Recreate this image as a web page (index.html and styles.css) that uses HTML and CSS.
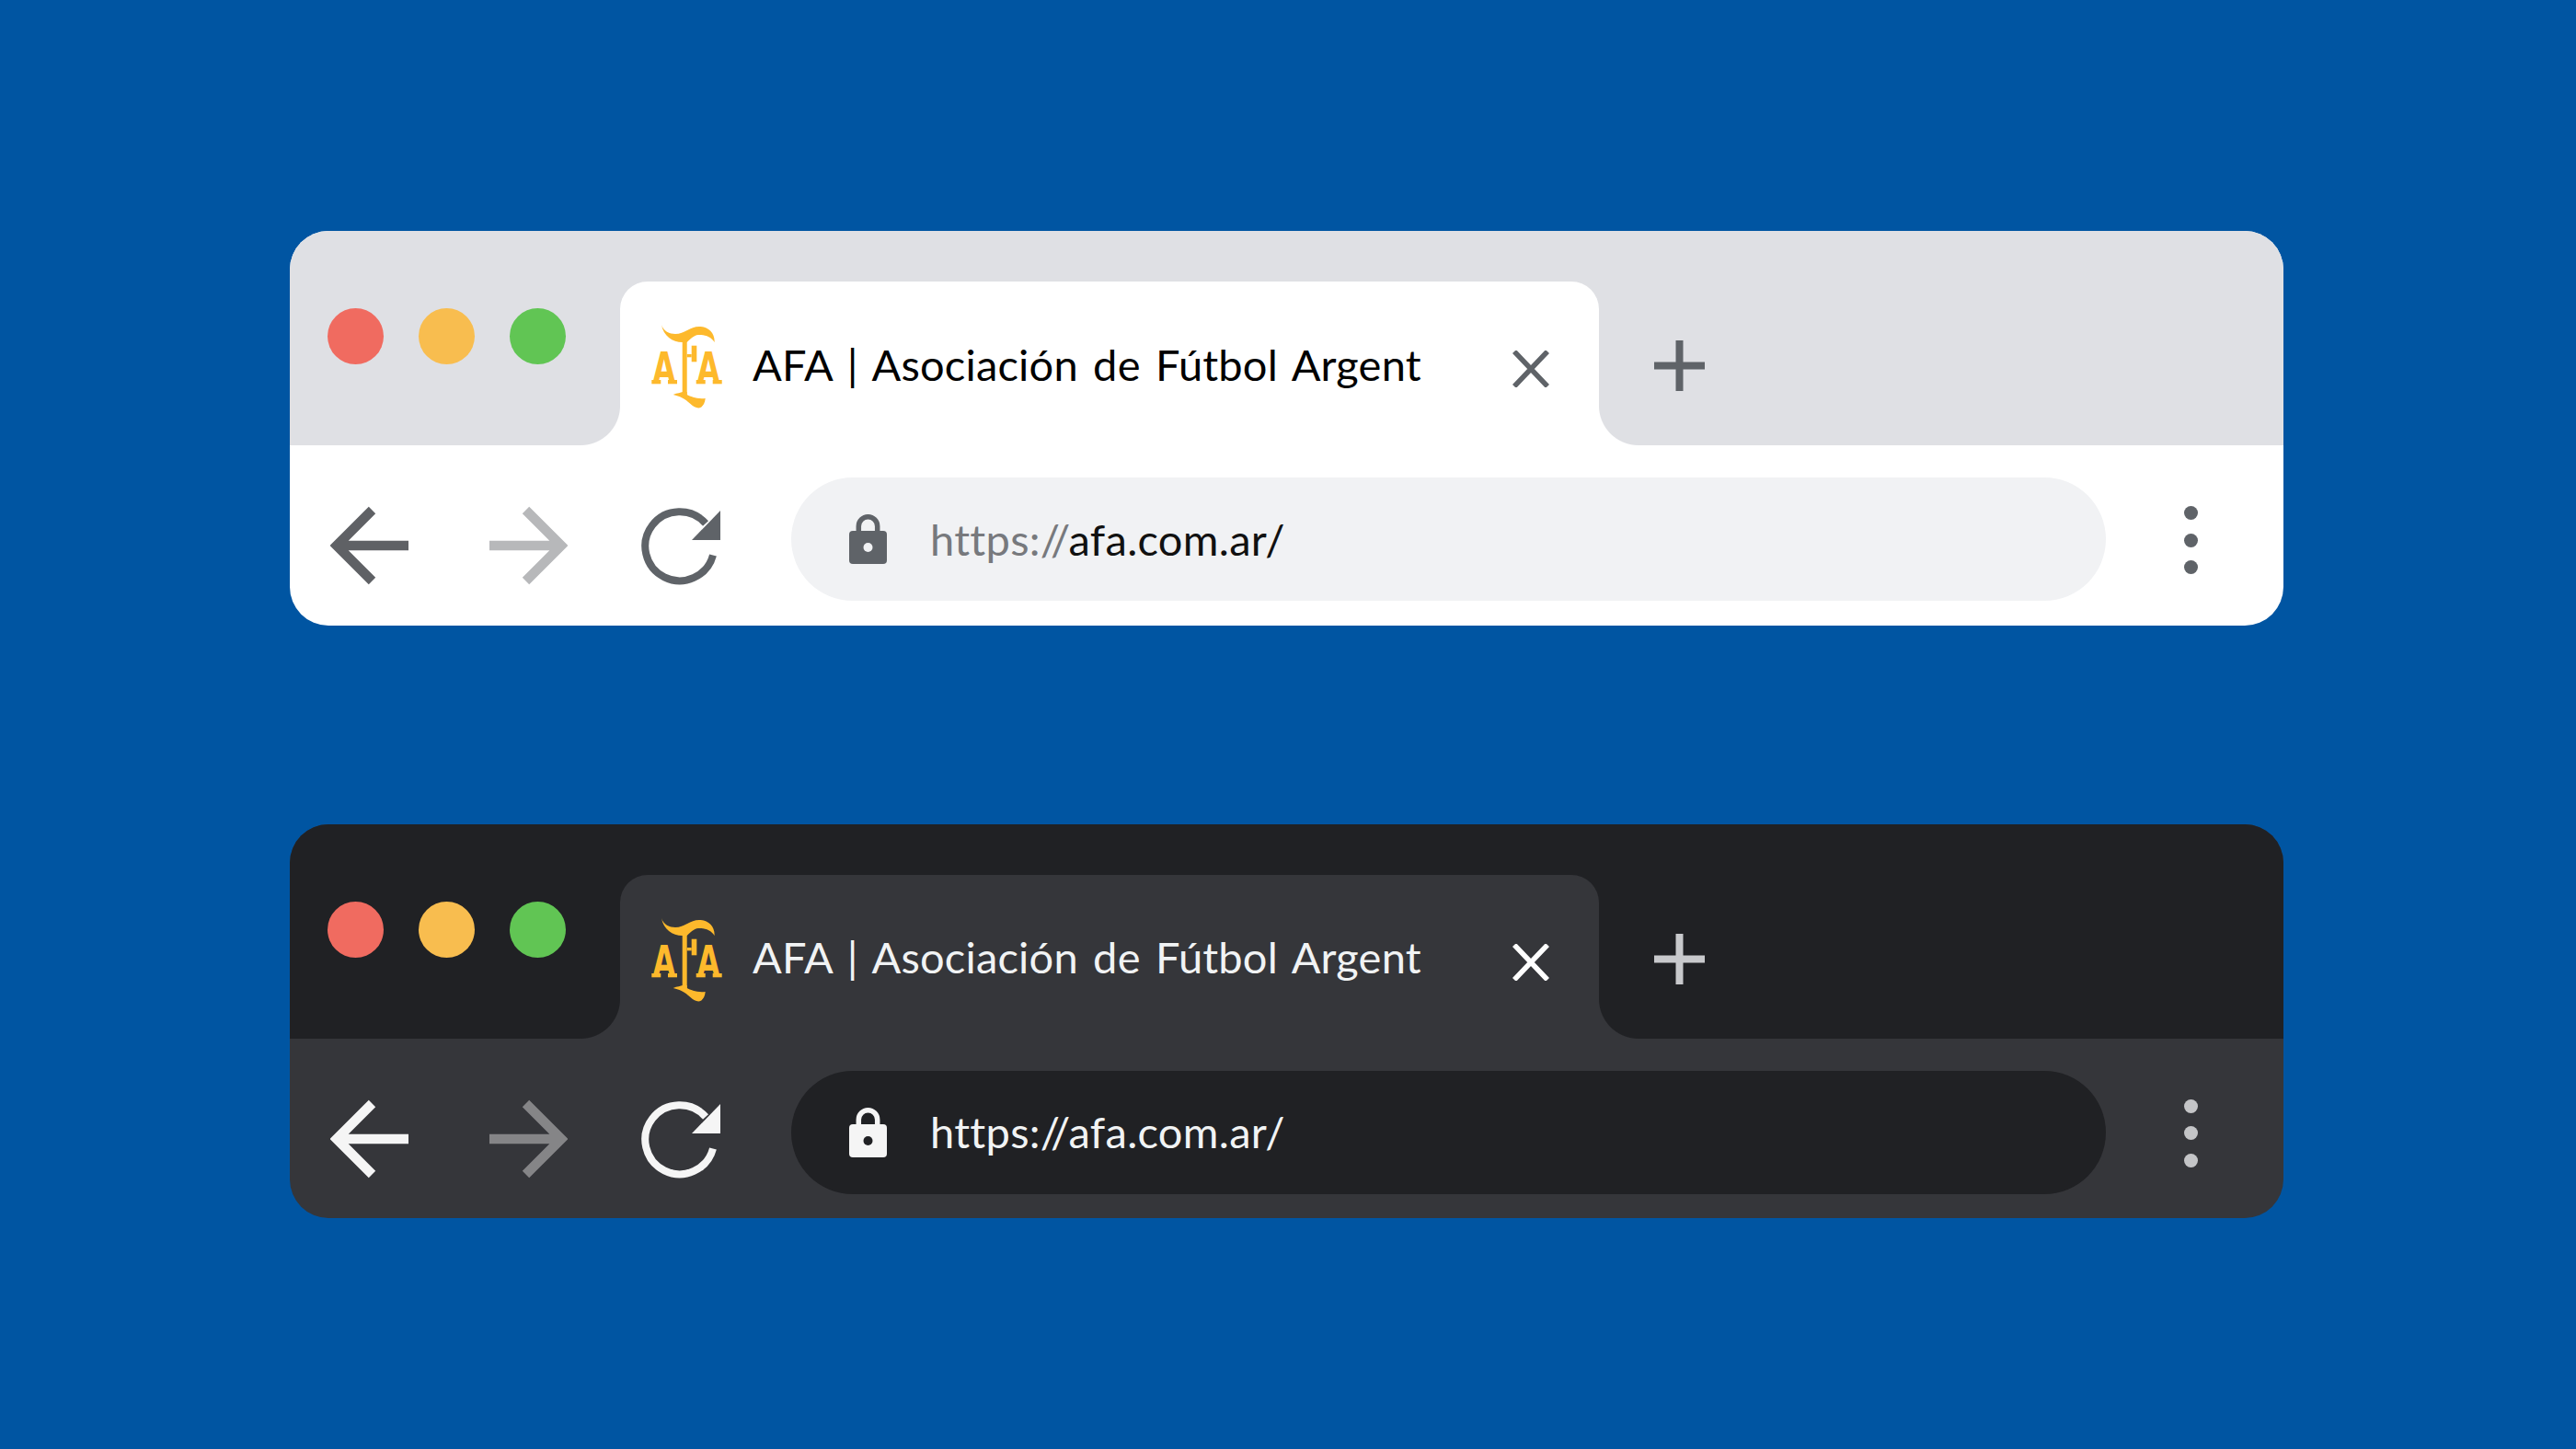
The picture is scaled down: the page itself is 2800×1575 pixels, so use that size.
FILE: index.html
```html
<!DOCTYPE html>
<html lang="es">
<head>
<meta charset="utf-8">
<title>AFA browser bars</title>
<link rel="stylesheet" href="styles.css">
</head>
<body>
<main class="stage">
  <section class="window light">
    <div class="strip">
      <div class="lights"><span class="dot red"></span><span class="dot yellow"></span><span class="dot green"></span></div>
      <div class="tab">
        <svg class="logo" viewBox="0 0 80 95"><g class="logo-mark"><path d="M13 1C15 8 22 11 28 11C38 11 44 3 54 3C63 3 71 9 70.7 20C67 14 60 11.5 53 12C48 12.5 44 17 40.7 20L35.7 20C25 20 15 13 13 1Z"/><rect x="35.7" y="15" width="5" height="63"/><path d="M25.7 77C30 75 34 75 36 74L40.7 74L40.7 77C45 79 51 82 60.7 81C60 88 56 93 51 91C44 89 41 80 25.7 77Z"/><rect x="45.7" y="23.7" width="5.6" height="17.6"/><rect x="40.7" y="33" width="5" height="3.3"/><text class="logo-a" transform="translate(3.5 64) scale(.68 1)">A</text><text class="logo-a" transform="translate(51.8 64) scale(.68 1)">A</text><rect x="2.3" y="61" width="10" height="4.3"/><rect x="20" y="61" width="10" height="4.3"/><rect x="50.7" y="61" width="10" height="4.3"/><rect x="68.7" y="61" width="10" height="4.3"/></g></svg>
        <span class="title">AFA | Asociación de Fútbol Argent</span>
        <svg class="close" viewBox="0 0 40 40"><path d="M2 1L38 39M38 1L2 39"/></svg>
      </div>
      <svg class="plus" viewBox="0 0 55 55"><path d="M0 27.5H55M27.5 0V55"/></svg>
    </div>
    <div class="toolbar">
      <svg class="nav back" viewBox="0 0 85 90"><path d="M85 45H7M45.5 6.5L7 45L45.5 83.5"/></svg>
      <svg class="nav forward" viewBox="0 0 85 90"><path d="M0 45H78M39.5 6.5L78 45L39.5 83.5"/></svg>
      <svg class="nav reload" viewBox="0 0 86 90"><path class="ring" d="M78 55.5A37.5 37.5 0 1 1 70 21"/><path class="head" d="M86 7V39H55Z"/></svg>
      <div class="omnibox">
        <svg class="lock" viewBox="0 0 42 54"><path class="shackle" d="M10.3 20V13A10.2 10.2 0 0 1 30.7 13V20"/><rect class="body" y="18" width="41" height="36" rx="4"/><circle class="hole" cx="20.5" cy="36" r="5"/></svg>
        <span class="url"><span class="scheme">https://</span>afa.com.ar/</span>
      </div>
      <div class="menu"><span></span><span></span><span></span></div>
    </div>
  </section>

  <section class="window dark">
    <div class="strip">
      <div class="lights"><span class="dot red"></span><span class="dot yellow"></span><span class="dot green"></span></div>
      <div class="tab">
        <svg class="logo" viewBox="0 0 80 95"><g class="logo-mark"><path d="M13 1C15 8 22 11 28 11C38 11 44 3 54 3C63 3 71 9 70.7 20C67 14 60 11.5 53 12C48 12.5 44 17 40.7 20L35.7 20C25 20 15 13 13 1Z"/><rect x="35.7" y="15" width="5" height="63"/><path d="M25.7 77C30 75 34 75 36 74L40.7 74L40.7 77C45 79 51 82 60.7 81C60 88 56 93 51 91C44 89 41 80 25.7 77Z"/><rect x="45.7" y="23.7" width="5.6" height="17.6"/><rect x="40.7" y="33" width="5" height="3.3"/><text class="logo-a" transform="translate(3.5 64) scale(.68 1)">A</text><text class="logo-a" transform="translate(51.8 64) scale(.68 1)">A</text><rect x="2.3" y="61" width="10" height="4.3"/><rect x="20" y="61" width="10" height="4.3"/><rect x="50.7" y="61" width="10" height="4.3"/><rect x="68.7" y="61" width="10" height="4.3"/></g></svg>
        <span class="title">AFA | Asociación de Fútbol Argent</span>
        <svg class="close" viewBox="0 0 40 40"><path d="M2 1L38 39M38 1L2 39"/></svg>
      </div>
      <svg class="plus" viewBox="0 0 55 55"><path d="M0 27.5H55M27.5 0V55"/></svg>
    </div>
    <div class="toolbar">
      <svg class="nav back" viewBox="0 0 85 90"><path d="M85 45H7M45.5 6.5L7 45L45.5 83.5"/></svg>
      <svg class="nav forward" viewBox="0 0 85 90"><path d="M0 45H78M39.5 6.5L78 45L39.5 83.5"/></svg>
      <svg class="nav reload" viewBox="0 0 86 90"><path class="ring" d="M78 55.5A37.5 37.5 0 1 1 70 21"/><path class="head" d="M86 7V39H55Z"/></svg>
      <div class="omnibox">
        <svg class="lock" viewBox="0 0 42 54"><path class="shackle" d="M10.3 20V13A10.2 10.2 0 0 1 30.7 13V20"/><rect class="body" y="18" width="41" height="36" rx="4"/><circle class="hole" cx="20.5" cy="36" r="5"/></svg>
        <span class="url"><span class="scheme">https://</span>afa.com.ar/</span>
      </div>
      <div class="menu"><span></span><span></span><span></span></div>
    </div>
  </section>
</main>
</body>
</html>
```
FILE: styles.css
```css
* { box-sizing: border-box; }
html, body { margin: 0; height: 100%; }
body { background: #0055a2; font-family: "Lato", "Open Sans", sans-serif; }

.stage {
  height: 1575px;
  padding-right: 3px;
  display: flex;
  flex-direction: column;
  align-items: center;
  justify-content: center;
  gap: 216px;
}

.window {
  width: 2167px;
  height: 428.5px;
  border-radius: 42px;
  overflow: hidden;
  display: flex;
  flex-direction: column;
  background: var(--toolbar);
}

.light {
  --strip: #dfe0e4;
  --toolbar: #ffffff;
  --omni: #f1f2f4;
  --title: #000000;
  --url: #111111;
  --scheme: #77797d;
  --close: #5f6368;
  --plus: #5f6368;
  --back: #5f6165;
  --forward: #b7b8ba;
  --reload: #5f6368;
  --lock: #5f6368;
  --menu: #5f6368;
}

.dark {
  --strip: #202124;
  --toolbar: #35363a;
  --omni: #202124;
  --title: #f1f3f4;
  --url: #f1f3f4;
  --scheme: #f1f3f4;
  --close: #ffffff;
  --plus: #c8c9cc;
  --back: #f5f5f5;
  --forward: #858587;
  --reload: #f5f5f5;
  --lock: #f5f5f5;
  --menu: #c4c5c7;
}

.strip {
  height: 233px;
  flex: none;
  display: flex;
  align-items: flex-start;
  background: var(--strip);
}

.lights {
  width: 359px;
  flex: none;
  display: flex;
  gap: 38px;
  padding: 84px 0 0 41px;
}

.dot { width: 61px; height: 61px; border-radius: 50%; }
.red { background: #f06b60; }
.yellow { background: #f8bd4f; }
.green { background: #61c554; }

.tab {
  position: relative;
  width: 1064px;
  height: 178px;
  margin-top: 55px;
  flex: none;
  display: flex;
  align-items: center;
  padding: 0 54px 0 32px;
  background: var(--toolbar);
  border-radius: 30px 30px 0 0;
}

.tab::before,
.tab::after {
  content: "";
  position: absolute;
  bottom: 0;
  width: 43px;
  height: 43px;
}
.tab::before { left: -43px; background: radial-gradient(circle at 0 0, transparent 42.5px, var(--toolbar) 43.5px); }
.tab::after { right: -43px; background: radial-gradient(circle at 100% 0, transparent 42.5px, var(--toolbar) 43.5px); }

.logo { width: 80px; height: 95px; flex: none; margin-top: 9px; }
.logo-mark { fill: #fdb92c; }
.logo-a { font-family: "DejaVu Sans", sans-serif; font-weight: 700; font-size: 47px; }

.title {
  margin: 2px 0 0 32px;
  font-size: 47px;
  line-height: 1;
  white-space: nowrap;
  color: var(--title);
  letter-spacing: 0.2px;
  word-spacing: 4px;
}

.close {
  width: 40px;
  height: 40px;
  flex: none;
  margin: 12px 0 0 auto;
  fill: none;
  stroke: var(--close);
  stroke-width: 5.5;
}

.plus {
  width: 55px;
  height: 55px;
  flex: none;
  margin: 119px 0 0 60px;
  fill: none;
  stroke: var(--plus);
  stroke-width: 8;
}

.toolbar {
  flex: 1;
  display: flex;
  align-items: flex-start;
  padding: 35px 0 0 44px;
}

.nav { height: 90px; flex: none; margin-top: 29px; fill: none; stroke-width: 10.5; }
.back { width: 85px; stroke: var(--back); }
.forward { width: 85px; margin-left: 88px; stroke: var(--forward); }
.reload { width: 86px; margin-left: 80px; }
.ring { stroke: var(--reload); stroke-width: 8; }
.head { fill: var(--reload); stroke: none; }

.omnibox {
  width: 1429px;
  height: 134px;
  flex: none;
  margin-left: 77px;
  padding-left: 63px;
  display: flex;
  align-items: center;
  gap: 46px;
  border-radius: 67px;
  background: var(--omni);
}

.lock { width: 42px; height: 54px; flex: none; }
.shackle { fill: none; stroke: var(--lock); stroke-width: 5.5; }
.body { fill: var(--lock); }
.hole { fill: var(--omni); }

.url {
  font-size: 47px;
  line-height: 1;
  white-space: nowrap;
  color: var(--url);
  letter-spacing: 0.3px;
}
.scheme { color: var(--scheme); }

.menu {
  display: flex;
  flex-direction: column;
  gap: 14.5px;
  margin: 31px 0 0 84.5px;
}
.menu span { width: 15px; height: 15px; border-radius: 50%; background: var(--menu); }
```
